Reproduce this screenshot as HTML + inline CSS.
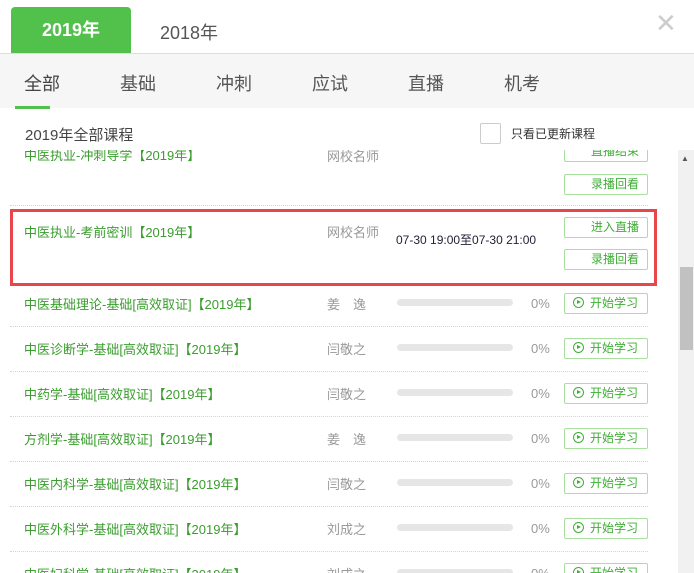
<!DOCTYPE html><html><head><meta charset="utf-8"><style>
*{margin:0;padding:0;box-sizing:border-box}
html,body{width:694px;height:573px;overflow:hidden}
body{background:#fff;font-family:"Liberation Sans","Noto Sans CJK SC",sans-serif;position:relative}
.a{position:absolute;white-space:nowrap}
.g{color:#3a9d2e;font-size:13px}
.t{color:#999;font-size:13px}
.btn{position:absolute;left:564px;width:84px;height:21px;border:1px solid #a9e0a0;border-radius:2px;color:#3fae36;font-size:12px;line-height:19px;text-align:right;padding-right:8px;background:#fff}
.bar{position:absolute;left:397px;width:116px;height:7px;background:#e6e6e6;border-radius:4px}
.pc{color:#999;font-size:13px}
.sep{position:absolute;left:10px;width:638px;border-top:1px dotted #d4d4d4}
.ic{display:inline-block;width:11px;height:11px;border:1px solid #3fae36;border-radius:50%;vertical-align:-1px;margin-right:6px;position:relative}
.ic:after{content:"";position:absolute;left:3px;top:2px;border-left:4px solid #3fae36;border-top:2.5px solid transparent;border-bottom:2.5px solid transparent}
</style></head><body>
<div class="a" style="left:11px;top:7px;width:120px;height:47px;background:#52c14b;border-radius:4px 4px 0 0;color:#fff;font-weight:bold;font-size:18px;line-height:47px;text-align:center">2019年</div>
<div class="a" style="left:160px;top:19px;font-size:18px;color:#555">2018年</div>
<div class="a" style="left:655px;top:8px;font-size:26px;color:#ccc">✕</div>
<div class="a" style="left:0;top:53px;width:694px;height:55px;background:#f6f6f6;border-top:1px solid #ddd"></div>
<div class="a" style="left:24px;top:70px;font-size:18px;color:#444">全部</div>
<div class="a" style="left:120px;top:70px;font-size:18px;color:#555">基础</div>
<div class="a" style="left:216px;top:70px;font-size:18px;color:#555">冲刺</div>
<div class="a" style="left:312px;top:70px;font-size:18px;color:#555">应试</div>
<div class="a" style="left:408px;top:70px;font-size:18px;color:#555">直播</div>
<div class="a" style="left:504px;top:70px;font-size:18px;color:#555">机考</div>
<div class="a" style="left:15px;top:106px;width:35px;height:3px;background:#52c14b"></div>
<div class="a" style="left:25px;top:124px;font-size:15px;color:#444">2019年全部课程</div>
<div class="a" style="left:480px;top:123px;width:21px;height:21px;border:1px solid #ccc;border-radius:2px"></div>
<div class="a" style="left:511px;top:125px;font-size:12px;color:#333">只看已更新课程</div>
<div class="a" style="left:0;top:150px;width:678px;height:423px;overflow:hidden">
 <div id="inner" style="position:absolute;left:0;top:-150px;width:678px;height:573px">
  <div class="a g" style="left:24px;top:145px">中医执业-冲刺导学【2019年】</div>
  <div class="a t" style="left:327px;top:146px">网校名师</div>
  <div class="btn" style="top:141px">直播结束</div>
  <div class="btn" style="top:174px">录播回看</div>
  <div class="sep" style="top:205px"></div>
  <div class="a" style="left:10px;top:209px;width:647px;height:77px;border:3px solid #e8464a"></div>
  <div class="a g" style="left:24px;top:222px">中医执业-考前密训【2019年】</div>
  <div class="a t" style="left:327px;top:222px">网校名师</div>
  <div class="a" style="left:396px;top:231px;font-size:12px;color:#223">07-30 19:00至07-30 21:00</div>
  <div class="btn" style="top:217px">进入直播</div>
  <div class="btn" style="top:249px">录播回看</div>
 </div>
</div>
<div class="a" style="left:678px;top:150px;width:16px;height:423px;background:#f1f1f1"></div>
<div class="a" style="left:681px;top:154px;font-size:8px;color:#555">▲</div>
<div class="a" style="left:680px;top:267px;width:13px;height:83px;background:#c1c1c1"></div>
<script>
var d=[["中医基础理论-基础[高效取证]【2019年】","姜　逸"],["中医诊断学-基础[高效取证]【2019年】","闫敬之"],["中药学-基础[高效取证]【2019年】","闫敬之"],["方剂学-基础[高效取证]【2019年】","姜　逸"],["中医内科学-基础[高效取证]【2019年】","闫敬之"],["中医外科学-基础[高效取证]【2019年】","刘成之"],["中医妇科学-基础[高效取证]【2019年】","刘成之"]];
var h="";d.forEach(function(r,i){var c=303+45*i;
h+='<div class="a g" style="left:24px;top:'+(c-9)+'px">'+r[0]+'</div><div class="a t" style="left:327px;top:'+(c-9)+'px">'+r[1]+'</div><div class="bar" style="top:'+(c-4)+'px"></div><div class="a pc" style="left:531px;top:'+(c-7)+'px">0%</div><div class="btn" style="top:'+(c-10)+'px;text-align:left;padding-left:8px"><span class="ic"></span>开始学习</div>';
if(i<6)h+='<div class="sep" style="top:'+(c+23)+'px"></div>';});
document.getElementById("inner").insertAdjacentHTML("beforeend",h);
</script>
</body></html>
